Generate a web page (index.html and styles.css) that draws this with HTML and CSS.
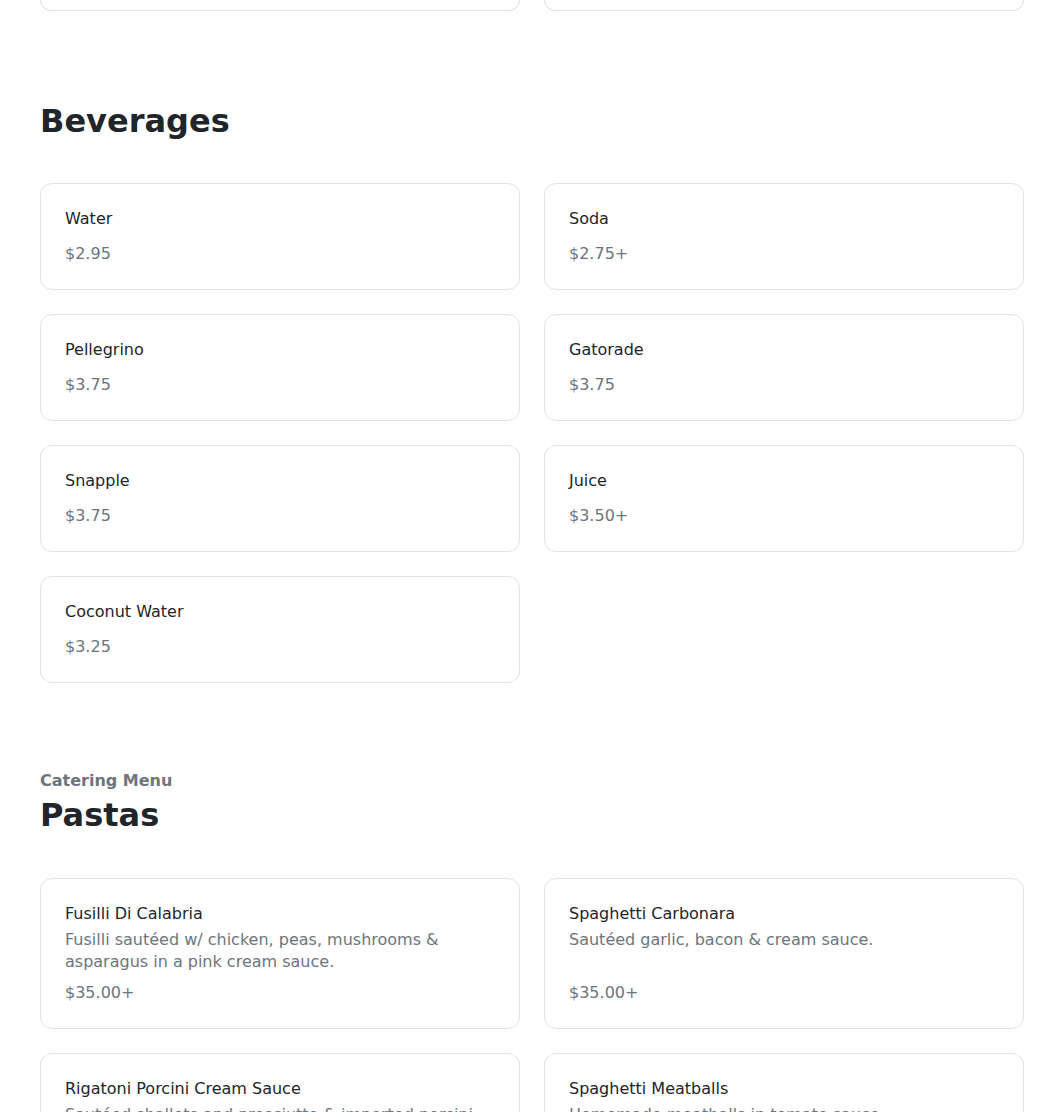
FILE: index.html
```html
<!DOCTYPE html>
<html lang="en">
<head>
    <meta charset="UTF-8">
    <meta name="viewport" content="width=device-width, initial-scale=1.0">
    <title>Catering Menu</title>
    <link rel="stylesheet" href="styles.css">
</head>
<body>
    <main class="menu">
        <!-- 前のセクションの最後の行（上にスクロールして隠れている部分） -->
        <div class="item-grid">
            <div class="item-card item-card--tail"></div>
            <div class="item-card item-card--tail"></div>
        </div>

        <section class="menu-section menu-section--plain">
            <h2 class="section-title">Beverages</h2>
            <div class="item-grid">
                <div class="item-card">
                    <div class="item-name">Water</div>
                    <div class="item-price">$2.95</div>
                </div>
                <div class="item-card">
                    <div class="item-name">Soda</div>
                    <div class="item-price">$2.75+</div>
                </div>
                <div class="item-card">
                    <div class="item-name">Pellegrino</div>
                    <div class="item-price">$3.75</div>
                </div>
                <div class="item-card">
                    <div class="item-name">Gatorade</div>
                    <div class="item-price">$3.75</div>
                </div>
                <div class="item-card">
                    <div class="item-name">Snapple</div>
                    <div class="item-price">$3.75</div>
                </div>
                <div class="item-card">
                    <div class="item-name">Juice</div>
                    <div class="item-price">$3.50+</div>
                </div>
                <div class="item-card">
                    <div class="item-name">Coconut Water</div>
                    <div class="item-price">$3.25</div>
                </div>
            </div>
        </section>

        <section class="menu-section">
            <div class="section-eyebrow">Catering Menu</div>
            <h2 class="section-title">Pastas</h2>
            <div class="item-grid">
                <div class="item-card">
                    <div class="item-name">Fusilli Di Calabria</div>
                    <p class="item-desc">Fusilli sautéed w/ chicken, peas, mushrooms &amp; asparagus in a pink cream sauce.</p>
                    <div class="item-price">$35.00+</div>
                </div>
                <div class="item-card">
                    <div class="item-name">Spaghetti Carbonara</div>
                    <p class="item-desc">Sautéed garlic, bacon &amp; cream sauce.</p>
                    <div class="item-price">$35.00+</div>
                </div>
                <div class="item-card">
                    <div class="item-name">Rigatoni Porcini Cream Sauce</div>
                    <p class="item-desc">Sautéed shallots and prosciutto &amp; imported porcini mushrooms in a cream sauce.</p>
                    <div class="item-price">$40.00+</div>
                </div>
                <div class="item-card">
                    <div class="item-name">Spaghetti Meatballs</div>
                    <p class="item-desc">Homemade meatballs in tomato sauce.</p>
                    <div class="item-price">$35.00+</div>
                </div>
            </div>
        </section>
    </main>
</body>
</html>
```

FILE: styles.css
```css
body {
    margin: 0;
    font-family: 'DejaVu Sans', 'Liberation Sans', sans-serif;
    font-size: 16px;
    line-height: 1.5;
    color: #212529;
    background-color: #fff;
}

.menu {
    padding: 0 20px 80px 40px;
}

.menu-section {
    padding-top: 86px;
}

.menu-section--plain {
    padding-top: 91px;
}

.section-eyebrow {
    font-weight: bold;
    color: #6c757d;
    margin-bottom: 3px;
}

.section-title {
    font-size: 32px;
    line-height: 1.2;
    font-weight: bold;
    margin: 0 0 43px;
    color: #212529;
}

.item-grid {
    display: grid;
    grid-template-columns: 1fr 1fr;
    gap: 24px;
}

.item-card {
    display: flex;
    flex-direction: column;
    padding: 23px 24px;
    border: 1px solid #e4e4e4;
    border-radius: 12px;
    background-color: #fff;
}

/* 上端で切れているカードの下端だけ */
.item-card--tail {
    height: 10px;
    padding: 0;
    border-top: 0;
    border-top-left-radius: 0;
    border-top-right-radius: 0;
}

.item-name {
    color: #212529;
    margin-bottom: 3px;
}

.item-desc {
    margin: 0;
    line-height: 22px;
    color: #6c757d;
}

.item-price {
    margin-top: auto;
    padding-top: 8px;
    color: #6c757d;
}
```
